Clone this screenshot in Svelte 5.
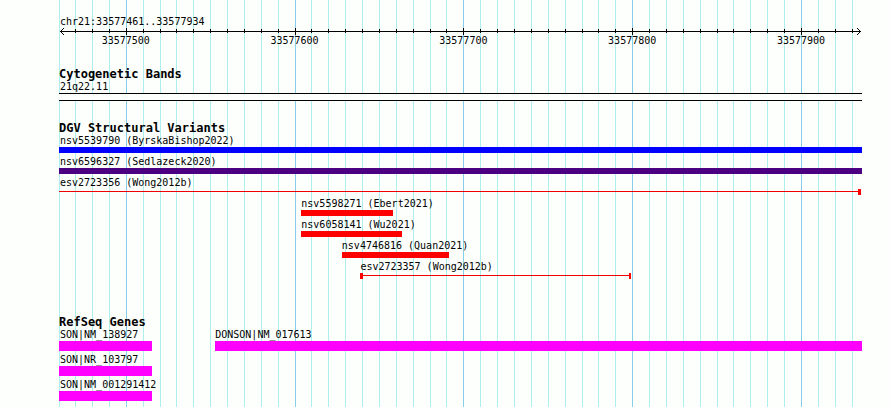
<script>
  // Visible window, in bases relative to 33,577,000
  const viewStart = 460.444;
  const viewEnd = 936.15;
  const span = viewEnd - viewStart;

  const pct = (pos) => Math.max(0, ((pos - viewStart) / span) * 100);

  const lines = Array.from({ length: 48 }, (_, i) => 460 + i * 10);
  const majors = lines.filter((p) => p % 100 === 0);
  const ticks = lines.slice(1);

  const variants = [
    { name: 'nsv5539790 (ByrskaBishop2022)', start: viewStart, end: viewEnd, color: '#0000ff' },
    { name: 'nsv6596327 (Sedlazeck2020)', start: viewStart, end: viewEnd, color: '#4b0082' },
    { name: 'esv2723356 (Wong2012b)', start: viewStart, end: 935.5, span: true, capEnd: 3 },
    { name: 'nsv5598271 (Ebert2021)', start: 604, end: 658.5, color: '#ff0000' },
    { name: 'nsv6058141 (Wu2021)', start: 604, end: 663.5, color: '#ff0000' },
    { name: 'nsv4746816 (Quan2021)', start: 628, end: 691.5, color: '#ff0000' },
    { name: 'esv2723357 (Wong2012b)', start: 639, end: 799.5, span: true, capStart: 3, capEnd: 2 }
  ].map((f) => [f]);

  const genes = [
    [
      { name: 'SON|NM_138927', start: viewStart, end: 515.5, color: '#ff00ff' },
      { name: 'DONSON|NM_017613', start: 553, end: viewEnd, color: '#ff00ff' }
    ],
    [{ name: 'SON|NR_103797', start: viewStart, end: 515.5, color: '#ff00ff' }],
    [{ name: 'SON|NM_001291412', start: viewStart, end: 515.5, color: '#ff00ff' }]
  ];
</script>

{#snippet track(title, rows, kind)}
  <section class="track {kind}">
    <h2>{title}</h2>
    <div class="rows">
      {#each rows as row}
        <div class="row">
          {#each row as f}
            <div
              class="feature"
              class:clipped={f.start === viewStart}
              style="margin-left: {pct(f.start)}%; width: {pct(f.end) - pct(f.start)}%"
            >
              <div class="label">{f.name}</div>
              {#if f.span}
                <div class="range">
                  <i class="cap" style="width: {f.capStart ?? 0}px"></i>
                  <i class="thread"></i>
                  <i class="cap" style="width: {f.capEnd}px"></i>
                </div>
              {:else}
                <div class="bar" style="background: {f.color}"></div>
              {/if}
            </div>
          {/each}
        </div>
      {/each}
    </div>
  </section>
{/snippet}

<main class="browser">
  <div class="canvas">
    <div class="grid" aria-hidden="true">
      {#each lines as p}
        <i class:major={p % 100 === 0} style="left: {pct(p)}%"></i>
      {/each}
    </div>

    <header class="ruler">
      <div class="label region">chr21:33577461..33577934</div>
      <div class="axis">
        <svg class="head" viewBox="0 0 4 7" width="4" height="7">
          <path d="M3 0h1v1h-1zM2 1h1v1h-1zM1 2h1v1h-1zM0 3h1v1h-1zM1 4h1v1h-1zM2 5h1v1h-1zM3 6h1v1h-1z" />
        </svg>
        <span class="shaft"></span>
        <svg class="head" viewBox="0 0 4 7" width="4" height="7">
          <path d="M0 0h1v1h-1zM1 1h1v1h-1zM2 2h1v1h-1zM3 3h1v1h-1zM2 4h1v1h-1zM1 5h1v1h-1zM0 6h1v1h-1z" />
        </svg>
      </div>
      <div class="ticks">
        {#each ticks as p}
          <i class:major={p % 100 === 0} style="left: {pct(p)}%"></i>
        {/each}
        {#each majors as p}
          <span style="left: {pct(p)}%">{33577000 + p}</span>
        {/each}
      </div>
    </header>

    <section class="track cytobands">
      <h2>Cytogenetic Bands</h2>
      <div class="label region">21q22.11</div>
      <div class="band"></div>
    </section>

    {@render track('DGV Structural Variants', variants, 'variants')}
    {@render track('RefSeq Genes', genes, 'genes')}
  </div>
</main>

<style>
  :global(body) {
    margin: 0;
    background: #fdfffc;
  }

  .browser {
    box-sizing: border-box;
    min-height: 100vh;
    padding: 0 28px 0 59px;
    display: flex;
    overflow: hidden;
    font: 10px/13px "DejaVu Sans Mono", monospace;
    color: #000;
    background: #fdfffc;
  }

  .canvas {
    position: relative;
    flex: 1;
    padding: 15px 0 6px;
  }

  .grid {
    position: absolute;
    inset: 0;
  }

  .grid i {
    position: absolute;
    top: 0;
    bottom: 0;
    width: 1px;
    background: #afeeee;
  }

  .grid i.major {
    background: #87ceeb;
  }

  .ruler,
  .track {
    position: relative;
  }

  .label {
    height: 13px;
    line-height: 13px;
    white-space: nowrap;
  }

  .region,
  .clipped .label {
    padding-left: 1px;
  }

  .axis {
    display: flex;
    align-items: center;
    height: 7px;
    padding: 0 1px;
  }

  .shaft {
    flex: 1;
    height: 1px;
    margin: 0 -3px;
    background: #000;
  }

  .head {
    display: block;
    fill: #000;
  }

  .ticks {
    position: relative;
    height: 12px;
  }

  .ticks i {
    position: absolute;
    top: -6px;
    width: 1px;
    height: 4px;
    background: #000;
  }

  .ticks i.major {
    top: -7px;
    height: 7px;
  }

  .ticks span {
    position: absolute;
    top: -1px;
    transform: translateX(-50%);
  }

  h2 {
    height: 13px;
    margin: 0;
    font: bold 12px/15px "DejaVu Sans Mono", monospace;
    white-space: nowrap;
  }

  .cytobands {
    margin-top: 20px;
  }

  .band {
    height: 6px;
    border: solid #000;
    border-width: 1px 0;
    background: #fdfffc;
  }

  .variants {
    margin-top: 20px;
  }

  .genes {
    margin-top: 36px;
  }

  .rows {
    display: flex;
    flex-direction: column;
    gap: 2px;
  }

  .row {
    display: grid;
    grid-template-columns: 100%;
  }

  .feature {
    grid-area: 1 / 1;
    min-width: 0;
  }

  .bar,
  .range {
    height: 6px;
  }

  .genes .bar {
    height: 10px;
  }

  .range {
    display: flex;
  }

  .cap {
    background: #ff0000;
  }

  .thread {
    flex: 1;
    height: 1px;
    margin-top: 2px;
    background: #f00000;
  }
</style>
